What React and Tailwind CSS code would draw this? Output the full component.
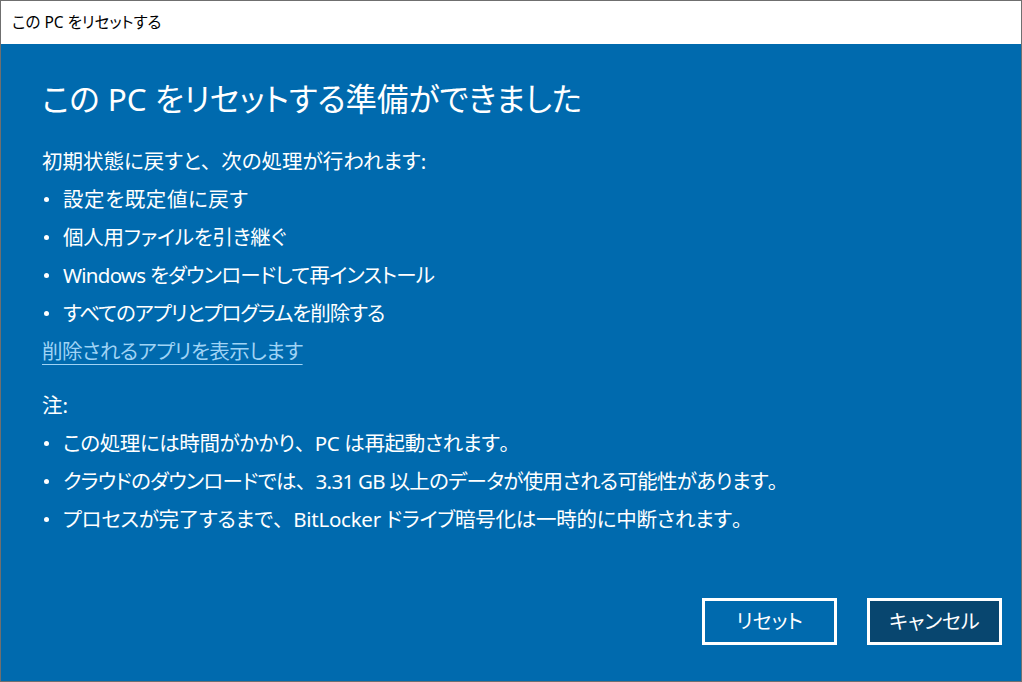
import React from "react";

const FONT = "[font-family:'Noto_Sans','Noto_Sans_CJK_JP',sans-serif] [font-feature-settings:'palt']";

function T({ children }) {
  const parts = String(children).split(/([、。])/);
  return (
    <>
      {parts.map((p, i) =>
        p === "、" || p === "。" ? (
          <span key={i} className="[font-feature-settings:normal]">{p}</span>
        ) : (
          <React.Fragment key={i}>{p}</React.Fragment>
        )
      )}
    </>
  );
}

function Bullet({ children, className = "" }) {
  return (
    <div className="flex items-center h-[38px]">
      <span className="w-[21px] flex items-center">
        <span className="ml-[2px] w-[5px] h-[5px] rounded-full bg-white" />
      </span>
      <span className={className}><T>{children}</T></span>
    </div>
  );
}

export default function App() {
  return (
    <div className={`w-[1022px] h-[682px] border border-[#6f6f6f] bg-[#006aae] flex flex-col overflow-hidden ${FONT}`}>
      <div className="h-[43px] bg-white flex items-center pl-[11px] text-[15.5px] text-black">
        この PC をリセットする
      </div>
      <div className="flex-1 flex flex-col pl-[41px] pr-[19px] text-white">
        <div className="mt-[35px] h-[40px] flex items-center text-[31.5px] leading-[40px]">
          この PC をリセットする準備ができました
        </div>
        <div className="mt-[23px] text-[20.5px] leading-[38px]">
          <div className="h-[38px] flex items-center"><span><T>初期状態に戻すと、次の処理が行われます:</T></span></div>
          <Bullet className="tracking-[0.6px]">設定を既定値に戻す</Bullet>
          <Bullet className="tracking-[-0.25px]">個人用ファイルを引き継ぐ</Bullet>
          <Bullet className="tracking-[-0.75px]">Windows をダウンロードして再インストール</Bullet>
          <Bullet className="tracking-[-1px]">すべてのアプリとプログラムを削除する</Bullet>
          <div className="h-[38px] flex items-center">
            <span className="text-[#9fd3f5] underline underline-offset-[5px] decoration-1 tracking-[-0.5px]">削除されるアプリを表示します</span>
          </div>
          <div className="mt-[16px] h-[38px] flex items-center">注:</div>
          <Bullet className="tracking-[-0.4px]">この処理には時間がかかり、PC は再起動されます。</Bullet>
          <Bullet className="tracking-[-0.7px]">クラウドのダウンロードでは、3.31 GB 以上のデータが使用される可能性があります。</Bullet>
          <Bullet className="tracking-[-0.25px]">プロセスが完了するまで、BitLocker ドライブ暗号化は一時的に中断されます。</Bullet>
        </div>
        <div className="flex-1" />
        <div className="flex justify-end gap-[30px] mb-[36px]">
          <button className="w-[135px] h-[47px] border-[3px] border-white bg-[#006aae] text-white text-[20px] flex items-center justify-center">
            リセット
          </button>
          <button className="w-[135px] h-[47px] border-[3px] border-white bg-[#08466f] text-white text-[20px] flex items-center justify-center">
            キャンセル
          </button>
        </div>
      </div>
    </div>
  );
}
